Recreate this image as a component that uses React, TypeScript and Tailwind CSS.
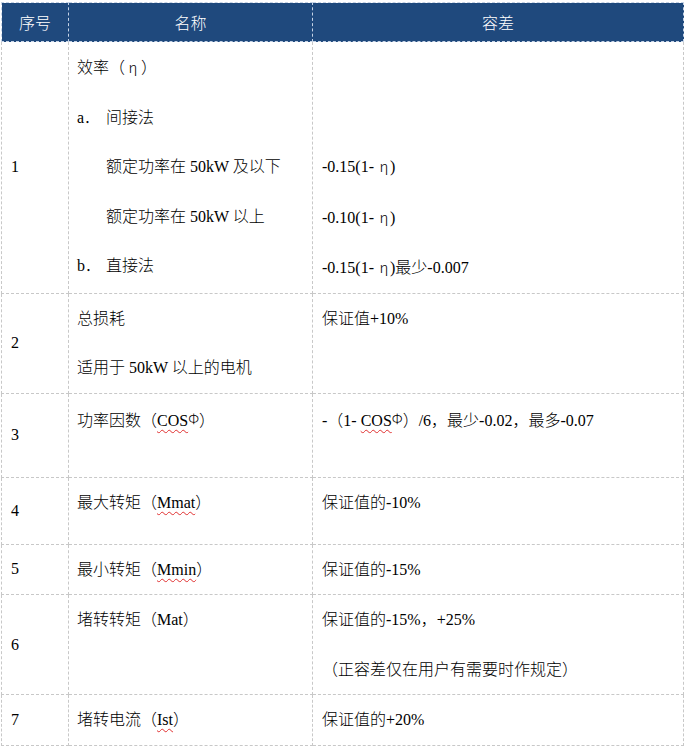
const cjk = { fontFamily: '"Noto Sans CJK SC", sans-serif' }

function Wavy({ children }: { children: React.ReactNode }) {
  return (
    <span className="underline decoration-wavy decoration-[#e03030] decoration-1 underline-offset-[3px]">
      {children}
    </span>
  )
}

function Eta({ wide }: { wide?: boolean }) {
  return (
    <span style={cjk} className={wide ? "inline-block w-[16px] text-center text-[15px] font-light" : "inline-block w-[12px] text-center text-[15px] font-light"}>
      η
    </span>
  )
}

function Phi() {
  return <span style={cjk} className="text-[14px] font-light align-[2px]">Φ</span>
}

type Row = {
  no: string
  h: string
  name: React.ReactNode[]
  tol: React.ReactNode[]
}

const rows: Row[] = [
  {
    no: "1",
    h: "h-[249px]",
    name: [
      <>效率（<Eta wide />）</>,
      <span className="flex"><span className="w-[29px]">a．</span>间接法</span>,
      <span className="pl-[29px]">额定功率在 50kW 及以下</span>,
      <span className="pl-[29px]">额定功率在 50kW 以上</span>,
      <span className="flex"><span className="w-[29px]">b．</span>直接法</span>,
    ],
    tol: [
      <>&nbsp;</>,
      <>&nbsp;</>,
      <>-0.15(1- <Eta />)</>,
      <>-0.10(1- <Eta />)</>,
      <>-0.15(1- <Eta />)最少-0.007</>,
    ],
  },
  {
    no: "2",
    h: "h-[98px]",
    name: [<>总损耗</>, <>适用于 50kW 以上的电机</>],
    tol: [<>保证值+10%</>],
  },
  {
    no: "3",
    h: "h-[84px]",
    name: [<>功率因数（<Wavy>COS</Wavy><Phi />）</>],
    tol: [<>-（1- <Wavy>COS</Wavy><Phi />）/6，最少-0.02，最多-0.07</>],
  },
  {
    no: "4",
    h: "h-[67px]",
    name: [<>最大转矩（<Wavy>Mmat</Wavy>）</>],
    tol: [<>保证值的-10%</>],
  },
  {
    no: "5",
    h: "h-[49px]",
    name: [<>最小转矩（<Wavy>Mmin</Wavy>）</>],
    tol: [<>保证值的-15%</>],
  },
  {
    no: "6",
    h: "h-[99px]",
    name: [<>堵转转矩（Mat）</>],
    tol: [<>保证值的-15%，+25%</>, <>（正容差仅在用户有需要时作规定）</>],
  },
  {
    no: "7",
    h: "h-[49px]",
    name: [<>堵转电流（<Wavy>Ist</Wavy>）</>],
    tol: [<>保证值的+20%</>],
  },
]

export default function App() {
  return (
    <div
      className="min-h-[747px] bg-white pl-[1px] pt-[2px] text-[16px] font-light text-black"
      style={{ fontFamily: '"Liberation Serif", "Noto Sans CJK SC", serif' }}
    >
      <table className="w-[682px] table-fixed border-collapse">
        <colgroup>
          <col className="w-[67px]" />
          <col className="w-[244px]" />
          <col className="w-[371px]" />
        </colgroup>
        <thead>
          <tr className="h-[39px] bg-[#1f497d] text-white" style={cjk}>
            <th className="border border-dashed border-[#c5d3e6] text-[16px] font-light">序号</th>
            <th className="border border-dashed border-[#c5d3e6] text-[16px] font-light">名称</th>
            <th className="border border-dashed border-[#c5d3e6] text-[16px] font-light">容差</th>
          </tr>
        </thead>
        <tbody>
          {rows.map((r) => (
            <tr key={r.no} className={r.h}>
              <td className="border border-dashed border-[#c8c8c8] pl-[9px] align-middle">{r.no}</td>
              <td className="border border-dashed border-[#c8c8c8] pl-[8px] align-top">
                {r.name.map((n, i) => (
                  <div key={i} className="leading-[49.5px]">{n}</div>
                ))}
              </td>
              <td className="border border-dashed border-[#c8c8c8] pl-[9px] align-top">
                {r.tol.map((t, i) => (
                  <div key={i} className="leading-[49.5px]">{t}</div>
                ))}
              </td>
            </tr>
          ))}
        </tbody>
      </table>
    </div>
  )
}
